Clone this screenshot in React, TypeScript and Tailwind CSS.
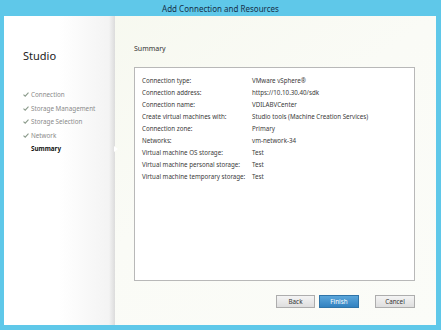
import React from "react";

const rows: [string, string][] = [
  ["Connection type:", "VMware vSphere®"],
  ["Connection address:", "https://10.10.30.40/sdk"],
  ["Connection name:", "VDILABVCenter"],
  ["Create virtual machines with:", "Studio tools (Machine Creation Services)"],
  ["Connection zone:", "Primary"],
  ["Networks:", "vm-network-34"],
  ["Virtual machine OS storage:", "Test"],
  ["Virtual machine personal storage:", "Test"],
  ["Virtual machine temporary storage:", "Test"],
];

const steps = ["Connection", "Storage Management", "Storage Selection", "Network"];

function Check() {
  return (
    <svg width="6" height="5" viewBox="0 0 6 5" className="shrink-0">
      <path d="M0.5 2.6 L2.2 4.2 L5.5 0.6" fill="none" stroke="#8a9a8a" strokeWidth="1.1" />
    </svg>
  );
}

export default function App() {
  return (
    <div
      className="w-[441px] h-[330px] bg-[#5fc8e9] flex flex-col overflow-hidden"
      style={{ fontFamily: '"Noto Sans", "Open Sans", sans-serif' }}
    >
      <div className="h-[16px] flex items-center justify-center text-[8px] text-[#15304a] shrink-0 pt-[1px]">
        Add Connection and Resources
      </div>
      <div className="flex-1 ml-[4px] mr-[5px] mb-[5px] flex bg-gradient-to-br from-[#f6f8ee] via-[#fafbf6] to-[#fbfcf8]">
        <div className="relative w-[111px] shrink-0 bg-gradient-to-r from-[#ffffff] via-[#ffffff] to-[#f2f2f2] flex flex-col">
          <div className="absolute right-0 top-0 bottom-0 w-[6px] bg-gradient-to-r from-transparent to-[#dcdcdc]" />
          <div className="absolute right-[-3px] top-[130px] w-0 h-0 border-y-[3px] border-y-transparent border-l-[4px] border-l-white" />
          <div className="pl-[19px] pt-[33px] text-[11px] leading-[14px] text-[#222]">Studio</div>
          <div className="pl-[19px] pt-[25px] flex flex-col">
            {steps.map((s) => (
              <div key={s} className="h-[13.5px] flex items-center gap-[2px] text-[6.3px] text-[#8a8a8a]">
                <Check />
                <span>{s}</span>
              </div>
            ))}
            <div className="h-[13.5px] flex items-center pl-[8px] text-[6.3px] font-bold text-[#111]">Summary</div>
          </div>
        </div>
        <div className="flex-1 flex flex-col pl-[19px] pr-[21px]">
          <div className="pt-[28px] h-[51px] text-[7px] text-[#333]">Summary</div>
          <div className="h-[214px] bg-white border border-[#b8b8b8] pt-[7px] pl-[7px] flex flex-col">
            {rows.map(([k, v]) => (
              <div key={k} className="h-[12px] flex items-center text-[6.2px] text-[#3a3a3a]">
                <div className="w-[110px] shrink-0">{k}</div>
                <div>{v}</div>
              </div>
            ))}
          </div>
          <div className="flex justify-end items-center gap-[4px] pt-[14px]">
            <div className="w-[39px] h-[13px] flex items-center justify-center text-[6.3px] text-[#333] border border-[#adadad] bg-gradient-to-b from-[#f4f4f4] to-[#dedede]">
              Back
            </div>
            <div className="w-[40px] h-[13px] flex items-center justify-center text-[6.3px] text-white border border-[#2f74a8] bg-gradient-to-b from-[#5aa6db] to-[#3282c0] mr-[12px]">
              Finish
            </div>
            <div className="w-[40px] h-[13px] flex items-center justify-center text-[6.3px] text-[#333] border border-[#adadad] bg-gradient-to-b from-[#f4f4f4] to-[#dedede]">
              Cancel
            </div>
          </div>
        </div>
      </div>
    </div>
  );
}
